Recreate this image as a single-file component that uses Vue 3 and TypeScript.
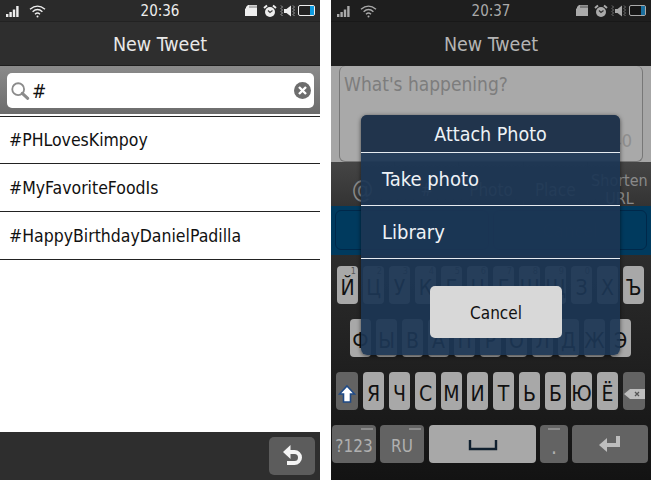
<script setup lang="ts">
const hashtags = ['#PHLovesKimpoy', '#MyFavoriteFoodIs', '#HappyBirthdayDanielPadilla']

const row1 = [
  ['Й', '1'], ['Ц', '2'], ['У', '3'], ['К', '4'], ['Е', '5'], ['Н', '6'],
  ['Г', '7'], ['Ш', '8'], ['Щ', '9'], ['З', '0'], ['Х', ''], ['Ъ', '']
]
const row2 = ['Ф', 'Ы', 'В', 'А', 'П', 'Р', 'О', 'Л', 'Д', 'Ж', 'Э']
const row3 = ['Я', 'Ч', 'С', 'М', 'И', 'Т', 'Ь', 'Б', 'Ю', 'Ё']
const tools = ['@', '#', 'Photo', 'Place']
const phones = [
  { time: '20:36' },
  { time: '20:37' }
]
</script>

<template>
  <div class="page">
    <!-- left phone: hashtag search -->
    <div class="phone">
      <div class="status">
        <svg class="signal" width="16" height="14" viewBox="0 0 16 14">
          <rect x="1" y="10" width="2.4" height="3" fill="#eee" />
          <rect x="4.4" y="8" width="2.4" height="5" fill="#eee" />
          <rect x="7.8" y="5.5" width="2.4" height="7.5" fill="#eee" />
          <rect x="11.2" y="2" width="2.4" height="11" fill="#eee" />
        </svg>
        <svg class="wifi" width="17" height="14" viewBox="0 0 17 14" fill="none" stroke="#eee" stroke-width="1.4">
          <path d="M1 5.2Q8.5 -1 16 5.2" />
          <path d="M3.6 7.8Q8.5 3.4 13.4 7.8" />
          <path d="M6 10.2Q8.5 8 11 10.2" />
          <circle cx="8.5" cy="12.5" r="1" fill="#eee" stroke="none" />
        </svg>
        <span class="time">{{ phones[0].time }}</span>
        <div class="status-right">
          <svg width="12" height="13" viewBox="0 0 12 13">
            <path d="M3 1H12V12H0V5L1 4V3Z" fill="#eee" />
            <path d="M5 1.5V4M7 1.5V4M9 1.5V4M11 1.5V4" stroke="#555" stroke-width=".8" />
          </svg>
          <svg class="alarm" width="14" height="14" viewBox="0 0 14 14">
            <circle cx="7" cy="8" r="5" fill="#eee" />
            <path d="M1 4L4 1.5M13 4L10 1.5" stroke="#eee" stroke-width="2" />
            <path d="M5 6.5L7 8.5L9.5 6.5" stroke="#444" stroke-width="1.2" fill="none" />
          </svg>
          <svg class="mute" width="16" height="14" viewBox="0 0 16 14">
            <path d="M1 1.5L2.5 3L1 4.5L2.5 6L1 7.5L2.5 9L1 10.5L2.5 12" stroke="#bbb" stroke-width=".8" fill="none" />
            <path d="M4 5H6.5L11 1.5V12.5L6.5 9H4Z" fill="#eee" />
            <path d="M13 1.5L14.5 3L13 4.5L14.5 6L13 7.5L14.5 9L13 10.5L14.5 12" stroke="#bbb" stroke-width=".8" fill="none" />
          </svg>
          <div class="battery"><i class="battery-fill"></i></div>
        </div>
      </div>
      <div class="title">New Tweet</div>
      <div class="search-band">
        <div class="search">
          <svg width="20" height="20" viewBox="0 0 22 22" fill="none" stroke="#8b8b8b">
            <circle cx="9" cy="9" r="6.5" stroke-width="2" />
            <path d="M13.5 13.5L19.5 19" stroke-width="3.4" stroke-linecap="round" />
          </svg>
          <span class="query">#</span>
          <svg class="clear" width="17" height="17" viewBox="0 0 17 17">
            <circle cx="8.5" cy="8.5" r="8.5" fill="#6d6d6d" />
            <path d="M5 5L12 12M12 5L5 12" stroke="#fff" stroke-width="2.4" />
          </svg>
        </div>
      </div>
      <ul class="tags">
        <li v-for="tag in hashtags" :key="tag">{{ tag }}</li>
      </ul>
      <div class="bottom-bar">
        <button class="back">
          <svg width="24" height="24" viewBox="0 0 24 24" fill="none" stroke="#f4f4f4" stroke-width="4">
            <path d="M8 8H14.500A5.500 5.500 0 0 1 14.500 19H7" />
            <path d="M10.500 1L3 8L10.500 15Z" fill="#f4f4f4" stroke="none" />
          </svg>
        </button>
      </div>
    </div>

    <!-- right phone: attach photo dialog over the compose view -->
    <div class="phone dimmed">
      <div class="status">
        <svg class="signal" width="16" height="14" viewBox="0 0 16 14">
          <rect x="1" y="10" width="2.4" height="3" fill="#aaa" />
          <rect x="4.4" y="8" width="2.4" height="5" fill="#aaa" />
          <rect x="7.8" y="5.5" width="2.4" height="7.5" fill="#aaa" />
          <rect x="11.2" y="2" width="2.4" height="11" fill="#aaa" />
        </svg>
        <svg class="wifi" width="17" height="14" viewBox="0 0 17 14" fill="none" stroke="#aaa" stroke-width="1.4">
          <path d="M1 5.2Q8.5 -1 16 5.2" />
          <path d="M3.6 7.8Q8.5 3.4 13.4 7.8" />
          <path d="M6 10.2Q8.5 8 11 10.2" />
          <circle cx="8.5" cy="12.5" r="1" fill="#aaa" stroke="none" />
        </svg>
        <span class="time">{{ phones[1].time }}</span>
        <div class="status-right">
          <svg width="12" height="13" viewBox="0 0 12 13">
            <path d="M3 1H12V12H0V5L1 4V3Z" fill="#aaa" />
            <path d="M5 1.5V4M7 1.5V4M9 1.5V4M11 1.5V4" stroke="#333" stroke-width=".8" />
          </svg>
          <svg class="alarm" width="14" height="14" viewBox="0 0 14 14">
            <circle cx="7" cy="8" r="5" fill="#aaa" />
            <path d="M1 4L4 1.5M13 4L10 1.5" stroke="#aaa" stroke-width="2" />
            <path d="M5 6.5L7 8.5L9.5 6.5" stroke="#333" stroke-width="1.2" fill="none" />
          </svg>
          <svg class="mute" width="16" height="14" viewBox="0 0 16 14">
            <path d="M1 1.5L2.5 3L1 4.5L2.5 6L1 7.5L2.5 9L1 10.5L2.5 12" stroke="#888" stroke-width=".8" fill="none" />
            <path d="M4 5H6.5L11 1.5V12.5L6.5 9H4Z" fill="#aaa" />
            <path d="M13 1.5L14.5 3L13 4.5L14.5 6L13 7.5L14.5 9L13 10.5L14.5 12" stroke="#888" stroke-width=".8" fill="none" />
          </svg>
          <div class="battery"><i class="battery-fill"></i></div>
        </div>
      </div>
      <div class="title">New Tweet</div>
      <div class="compose-band">
        <div class="compose">What's happening?<span class="count">140</span></div>
      </div>
      <div class="toolbar">
        <span v-for="t in tools" :key="t" class="tool" :class="{ big: t === '@' }">{{ t }}</span>
        <span class="tool shorten">Shorten<br />URL</span>
      </div>
      <div class="actions">
        <div class="action">Tweet</div>
        <div class="action">Cancel</div>
      </div>
      <div class="keyboard">
        <div class="keys row1">
          <div v-for="k in row1" :key="k[0]" class="key">
            {{ k[0] }}<sup v-if="k[1]" class="hint">{{ k[1] }}</sup>
          </div>
        </div>
        <div class="keys row2">
          <div v-for="k in row2" :key="k" class="key">{{ k }}</div>
        </div>
        <div class="keys row3">
          <div class="key dark">
            <svg width="18" height="20" viewBox="0 0 18 20">
              <path d="M9 2L16.5 10H12.5V18H5.5V10H1.5Z" fill="#fff" stroke="#1f4a86" stroke-width="1.6" />
            </svg>
          </div>
          <div v-for="k in row3" :key="k" class="key">{{ k }}</div>
          <div class="key dark">
            <svg width="21" height="10" viewBox="0 0 21 10">
              <path d="M6 0H21V10H6L0 5Z" fill="#bdbdbd" />
              <path d="M11 3L15 7M15 3L11 7" stroke="#555" stroke-width="1.3" />
            </svg>
          </div>
        </div>
        <div class="keys row4">
          <div class="key dark wide"><i class="dash"></i>?123</div>
          <div class="key dark wide"><i class="dash"></i>RU</div>
          <div class="key space">
            <svg width="30" height="12" viewBox="0 0 30 12" fill="none" stroke="#10202f" stroke-width="2.4">
              <path d="M2 1V10H28V1" />
            </svg>
          </div>
          <div class="key dark dot"><i class="dash"></i>.</div>
          <div class="key dark enter">
            <svg width="24" height="20" viewBox="0 0 24 20">
              <path d="M20 2V11H8" fill="none" stroke="#bdbdbd" stroke-width="4" />
              <path d="M9 4V18L1 11Z" fill="#bdbdbd" />
            </svg>
          </div>
        </div>
      </div>

      <div class="dialog">
        <div class="dialog-title">Attach Photo</div>
        <div class="dialog-item">Take photo</div>
        <div class="dialog-item">Library</div>
        <div class="dialog-foot">
          <button class="dialog-cancel">Cancel</button>
        </div>
      </div>
    </div>
  </div>
</template>

<style scoped>
.page {
  display: flex;
  gap: 11px;
  width: 651px;
  height: 480px;
  background: #fff;
  font-family: "DejaVu Sans", "Noto Sans", sans-serif;
  font-stretch: condensed;
  overflow: hidden;
}

.phone {
  position: relative;
  display: flex;
  flex-direction: column;
  width: 320px;
  height: 480px;
  background: #fff;
  overflow: hidden;
}

.status {
  display: flex;
  align-items: center;
  height: 22px;
  padding: 0 5px;
  background: #2a2a2a;
  border-bottom: 1px solid #222;
  box-sizing: border-box;
  color: #eee;
  position: relative;
}

.wifi {
  margin-left: 8px;
}

.time {
  position: absolute;
  left: 0;
  right: 0;
  text-align: center;
  font-size: 15px;
}

.status-right {
  display: flex;
  align-items: center;
  gap: 3px;
  margin-left: auto;
}

.alarm {
  margin-left: 3px;
}

.battery {
  display: flex;
  justify-content: flex-end;
  width: 17px;
  height: 11px;
  margin-left: -1px;
  border: 1px solid #eee;
  border-radius: 2px;
  box-sizing: border-box;
  background: #222;
}

.battery-fill {
  width: 4px;
  background: #0d9be0;
}

.title {
  height: 44px;
  line-height: 45px;
  text-align: center;
  font-size: 19.5px;
  color: #e8e8e8;
  background: #2e2e2e;
  border-bottom: 1px solid #1e1e1e;
  box-sizing: border-box;
}

.search-band {
  height: 48px;
  padding: 7px 6px 6px 7px;
  box-sizing: border-box;
  background: linear-gradient(#8a8a8a, #6c6c6c);
}

.search {
  display: flex;
  align-items: center;
  height: 35px;
  padding: 0 3px 0 3px;
  background: #fff;
  border-radius: 5px;
}

.query {
  margin-left: 2px;
  font-size: 19px;
  color: #111;
}

.clear {
  margin-left: auto;
}

.tags {
  margin: 2px 0 0;
  padding: 0;
  list-style: none;
  border-top: 1px solid #222;
  flex: 1;
}

.tags li {
  height: 48px;
  line-height: 49px;
  padding-left: 9px;
  font-size: 17.5px;
  color: #111;
  border-bottom: 1px solid #222;
  box-sizing: border-box;
}

.tags li:first-child {
  height: 47px;
  line-height: 46px;
}

.bottom-bar {
  display: flex;
  justify-content: flex-end;
  align-items: center;
  height: 48px;
  padding: 0 5px;
  background: #2e2e2e;
  box-sizing: border-box;
}

.back {
  display: flex;
  align-items: center;
  justify-content: center;
  width: 46px;
  height: 38px;
  padding: 0;
  border: 0;
  border-radius: 5px;
  background: #5c5c5c;
}

/* right phone, everything under the dialog is dimmed */
.dimmed .status {
  background: #1e1e1e;
  border-bottom-color: #181818;
  color: #aaa;
}

.dimmed .title {
  background: #202020;
  color: #b4b4b4;
  border-bottom: 0;
}

.dimmed .battery {
  border-color: #aaa;
  background: #161616;
}

.dimmed .battery-fill {
  background: #1a6f9f;
}

.compose-band {
  height: 96px;
  padding: 0 8px;
  background: #a6a6a6;
  box-sizing: border-box;
}

.compose {
  position: relative;
  height: 96px;
  padding: 5px 4px;
  box-sizing: border-box;
  font-size: 19px;
  line-height: 26px;
  color: #7d7d7d;
  background: #a9a9a9;
  border: 1px solid #777;
  border-top: 0;
  border-radius: 6px;
}

.count {
  position: absolute;
  right: 10px;
  bottom: 7px;
  font-size: 18px;
  color: #8e8e8e;
}

.toolbar {
  display: flex;
  height: 44px;
  background: linear-gradient(#454545, #333);
  box-sizing: border-box;
}

.tool {
  flex: 1;
  padding-top: 18px;
  text-align: center;
  font-size: 17px;
  line-height: 20px;
  color: #8a8a8a;
  box-sizing: border-box;
}

.tool + .tool {
  border-left: 1px solid #424242;
}

.tool.big {
  font-size: 24px;
}

.tool.shorten {
  padding-top: 10px;
  font-size: 16px;
  line-height: 18px;
}

.actions {
  display: flex;
  gap: 4px;
  height: 49px;
  padding: 4px;
  background: #003a5e;
  box-sizing: border-box;
}

.action {
  flex: 1;
  height: 40px;
  line-height: 40px;
  text-align: center;
  font-size: 18px;
  color: #123d5a;
  border: 1px solid #00284a;
  border-radius: 6px;
  box-sizing: border-box;
}

.keyboard {
  flex: 1;
  display: flex;
  flex-direction: column;
  padding-top: 11px;
  background: linear-gradient(#2c2c2c, #131313);
}

.keys {
  display: flex;
  gap: 5px;
  height: 38px;
  margin-bottom: 15px;
}

.row1 {
  padding-left: 6px;
}

.row2 {
  padding-left: 19px;
}

.row3 {
  padding-left: 5px;
}

.row4 {
  padding-left: 1px;
  gap: 4px;
}

.key {
  position: relative;
  display: flex;
  align-items: center;
  justify-content: center;
  flex: 0 0 21px;
  height: 38px;
  padding-top: 5px;
  border-radius: 4px;
  background: #a8a8a8;
  color: #111;
  font-size: 21px;
  box-sizing: border-box;
}

.row3 .key:first-child,
.row3 .key:last-child {
  flex-basis: 22px;
}

.hint {
  position: absolute;
  top: 0;
  right: 2px;
  font-size: 9px;
  line-height: 11px;
  color: #555;
}

.key.dark {
  background: #636363;
  color: #b0b0b0;
}

.key.wide {
  flex-basis: 44px;
  padding-top: 4px;
  font-size: 17px;
}

.key.space {
  flex-basis: 107px;
  margin-left: 1px;
  padding-top: 2px;
}

.key.dot {
  flex-basis: 28px;
}

.key.enter {
  flex-basis: 76px;
  padding-top: 0;
}

.dash {
  position: absolute;
  top: 3px;
  right: 3px;
  width: 12px;
  height: 2px;
  background: #8c8c8c;
}

.dot .dash {
  right: 8px;
}

/* dialog floats over the dimmed page */
.dialog {
  position: absolute;
  left: 30px;
  top: 115px;
  width: 259px;
  height: 240px;
  display: flex;
  flex-direction: column;
  border-radius: 6px;
  background: rgba(28, 54, 84, 0.93);
  box-shadow: 0 1px 4px rgba(0, 0, 0, 0.6);
  color: #eef2f6;
}

.dialog-title {
  height: 38px;
  line-height: 39px;
  text-align: center;
  font-size: 19.5px;
  border-bottom: 1px solid #e6ebf0;
  border-radius: 6px 6px 0 0;
  background: #21344c;
  box-sizing: border-box;
}

.dialog-item {
  height: 53px;
  line-height: 52px;
  padding-left: 21px;
  font-size: 20px;
  border-bottom: 1px solid #e6ebf0;
  box-sizing: border-box;
}

.dialog-item:last-of-type {
  height: 54px;
  line-height: 57px;
}

.dialog-foot {
  flex: 1;
  display: flex;
  justify-content: center;
  padding: 27px 0 0 11px;
}

.dialog-cancel {
  width: 132px;
  height: 52px;
  padding: 2px 0 0;
  border: 0;
  border-radius: 5px;
  background: #d8d8d8;
  color: #111;
  font-family: inherit;
  font-stretch: condensed;
  font-size: 17px;
}
</style>
